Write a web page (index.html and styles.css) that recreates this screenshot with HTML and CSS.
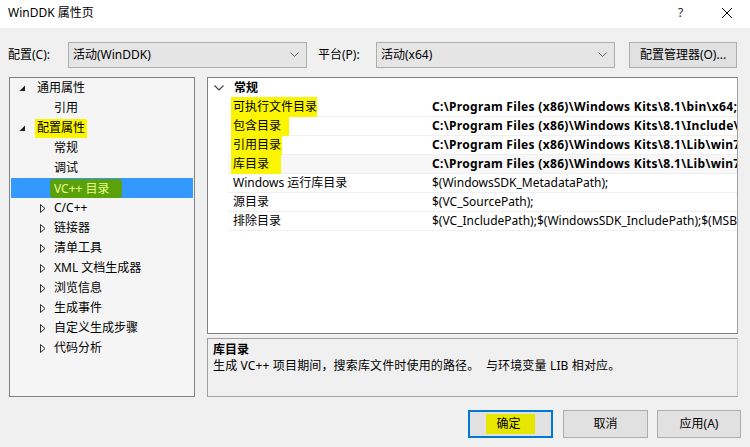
FILE: index.html
```html
<!DOCTYPE html>
<html lang="zh-CN">
<head>
<meta charset="utf-8">
<title>WinDDK 属性页</title>
<link rel="stylesheet" href="styles.css">
</head>
<body>
<div class="window">
  <div class="titlebar">
    <span class="title">WinDDK 属性页</span>
    <span class="help">?</span>
    <span class="close"><svg width="12" height="12" viewBox="0 0 12 12"><path d="M1 1L11 11M11 1L1 11" stroke="#000" stroke-width="1" fill="none"/></svg></span>
  </div>
  <div class="main">
    <div class="toolbar">
      <span class="label lab1">配置(C):</span>
      <div class="combo c1"><span>活动(WinDDK)</span><svg class="chev" width="9" height="6" viewBox="0 0 9 6"><path d="M0.5 0.5L4.5 4.5L8.5 0.5" stroke="#606060" fill="none"/></svg></div>
      <span class="label lab2">平台(P):</span>
      <div class="combo c2"><span>活动(x64)</span><svg class="chev" width="9" height="6" viewBox="0 0 9 6"><path d="M0.5 0.5L4.5 4.5L8.5 0.5" stroke="#606060" fill="none"/></svg></div>
      <div class="btn mgr">配置管理器(O)...</div>
    </div>
    <div class="content">
      <div class="tree">
        <div class="ti l0"><svg class="exp" width="7" height="7" viewBox="0 0 7 7"><path d="M6 0.5L6 6L0.5 6Z" fill="#222"/></svg><span>通用属性</span></div>
        <div class="ti l1"><span>引用</span></div>
        <div class="ti l0"><svg class="exp" width="7" height="7" viewBox="0 0 7 7"><path d="M6 0.5L6 6L0.5 6Z" fill="#222"/></svg><span class="hl hl-tree">配置属性</span></div>
        <div class="ti l1"><span>常规</span></div>
        <div class="ti l1"><span>调试</span></div>
        <div class="ti l1 sel"><span class="hl-green">VC++ 目录</span></div>
        <div class="ti l1c"><svg class="col" width="6" height="9" viewBox="0 0 6 9"><path d="M0.5 0.5L5 4.5L0.5 8.5Z" fill="none" stroke="#333"/></svg><span>C/C++</span></div>
        <div class="ti l1c"><svg class="col" width="6" height="9" viewBox="0 0 6 9"><path d="M0.5 0.5L5 4.5L0.5 8.5Z" fill="none" stroke="#333"/></svg><span>链接器</span></div>
        <div class="ti l1c"><svg class="col" width="6" height="9" viewBox="0 0 6 9"><path d="M0.5 0.5L5 4.5L0.5 8.5Z" fill="none" stroke="#333"/></svg><span>清单工具</span></div>
        <div class="ti l1c"><svg class="col" width="6" height="9" viewBox="0 0 6 9"><path d="M0.5 0.5L5 4.5L0.5 8.5Z" fill="none" stroke="#333"/></svg><span>XML 文档生成器</span></div>
        <div class="ti l1c"><svg class="col" width="6" height="9" viewBox="0 0 6 9"><path d="M0.5 0.5L5 4.5L0.5 8.5Z" fill="none" stroke="#333"/></svg><span>浏览信息</span></div>
        <div class="ti l1c"><svg class="col" width="6" height="9" viewBox="0 0 6 9"><path d="M0.5 0.5L5 4.5L0.5 8.5Z" fill="none" stroke="#333"/></svg><span>生成事件</span></div>
        <div class="ti l1c"><svg class="col" width="6" height="9" viewBox="0 0 6 9"><path d="M0.5 0.5L5 4.5L0.5 8.5Z" fill="none" stroke="#333"/></svg><span>自定义生成步骤</span></div>
        <div class="ti l1c"><svg class="col" width="6" height="9" viewBox="0 0 6 9"><path d="M0.5 0.5L5 4.5L0.5 8.5Z" fill="none" stroke="#333"/></svg><span>代码分析</span></div>
      </div>
      <div class="right">
        <div class="grid">
          <div class="ghead"><svg class="gchev" width="10" height="6" viewBox="0 0 10 6"><path d="M0.5 0.5L5 5L9.5 0.5" stroke="#444" stroke-width="1.2" fill="none"/></svg><span class="gtitle">常规</span></div>
          <div class="grow"><div class="gname"><span class="hl hl-a">可执行文件目录</span></div><div class="gval b">C:\Program Files (x86)\Windows Kits\8.1\bin\x64;</div></div>
          <div class="grow"><div class="gname"><span class="hl hl-b">包含目录</span></div><div class="gval b">C:\Program Files (x86)\Windows Kits\8.1\Include\</div></div>
          <div class="grow"><div class="gname"><span class="hl hl-c">引用目录</span></div><div class="gval b">C:\Program Files (x86)\Windows Kits\8.1\Lib\win7</div></div>
          <div class="grow cur"><div class="gname"><span class="hl hl-d">库目录</span></div><div class="gval b">C:\Program Files (x86)\Windows Kits\8.1\Lib\win7</div></div>
          <div class="grow"><div class="gname">Windows 运行库目录</div><div class="gval">$(WindowsSDK_MetadataPath);</div></div>
          <div class="grow"><div class="gname">源目录</div><div class="gval">$(VC_SourcePath);</div></div>
          <div class="grow"><div class="gname">排除目录</div><div class="gval">$(VC_IncludePath);$(WindowsSDK_IncludePath);$(MSB</div></div>
        </div>
        <div class="desc">
          <div class="dtitle">库目录</div>
          <div class="dtext">生成 VC++ 项目期间，搜索库文件时使用的路径。&nbsp;&nbsp;与环境变量 LIB 相对应。</div>
        </div>
      </div>
    </div>
    <div class="buttons">
      <div class="btn ok"><span class="hl-ok">确定</span></div>
      <div class="btn">取消</div>
      <div class="btn apply">应用(A)</div>
    </div>
  </div>
</div>
</body>
</html>
```
FILE: styles.css
```css
* { box-sizing: border-box; }
html, body { margin: 0; padding: 0; }
body {
  width: 750px;
  height: 447px;
  overflow: hidden;
  font-family: "Noto Sans", "Noto Sans CJK SC", sans-serif;
  font-size: 12px;
  color: #000;
  background: #f0f0f0;
}
.window { width: 750px; height: 447px; display: flex; flex-direction: column; }
.titlebar {
  height: 28px;
  background: #fff;
  display: flex;
  align-items: center;
  padding: 0 0 2px 8px;
}
.title { flex: 1; font-size: 12px; line-height: 16px; }
.help { font-size: 12px; line-height: 16px; width: 12px; margin-right: 31px; color: #222; }
.close { width: 12px; height: 12px; margin-right: 17px; display: flex; }
.main { flex: 1; padding: 14px 11px 0 8px; }
.toolbar { display: flex; align-items: center; height: 26px; }
.label { line-height: 16px; }
.lab1 { width: 60px; }
.lab2 { width: 58px; margin-left: 11px; }
.combo {
  height: 26px;
  background: #e5e5e5;
  border: 1px solid #adadad;
  display: flex;
  align-items: center;
  justify-content: space-between;
  padding: 0 5px 0 4px;
  line-height: 16px;
}
.c1 { width: 239px; }
.c2 { width: 239px; }
.chev { margin-right: 2px; }
.btn {
  background: #e1e1e1;
  border: 1px solid #adadad;
  display: flex;
  align-items: center;
  justify-content: center;
  line-height: 16px;
}
.mgr { width: 108px; height: 26px; margin-left: 14px; }
.content { display: flex; margin-top: 9px; gap: 12px; margin-left: 1px; }
.tree {
  width: 186px;
  height: 320px;
  background: #f5f5f5;
  border: 1px solid #828282;
  padding: 0 1px;
}
.ti { height: 20px; display: flex; align-items: center; line-height: 16px; white-space: nowrap; }
.ti.l0 { padding-left: 8px; }
.ti.l0 .exp { margin-right: 11px; }
.ti.l1 { padding-left: 43px; }
.ti.l1c { padding-left: 29px; }
.ti.l1c .col { margin-right: 8px; }
.ti.sel { background: #3399ff; color: #fff; padding-left: 39px; }
.hl { background: #fbf500; }
.hl-tree { margin-left: -2px; padding: 1px 2px 2px 2px; }
.hl-green { background: #5ba10c; color: #e8ff8a; padding: 2px 12px 1px 4px; border-radius: 3px; }
.right { width: 531px; display: flex; flex-direction: column; gap: 4px; }
.grid {
  height: 257px;
  background: #fff;
  border: 1px solid #828282;
  border-right-color: #a0a0a0;
  overflow: hidden;
}
.ghead { height: 20px; display: flex; align-items: center; padding-left: 6px; }
.gchev { margin-right: 10px; }
.gtitle { font-weight: bold; line-height: 16px; }
.grow { height: 19px; display: flex; align-items: center; margin-left: 20px; border-bottom: 1px solid #f0f0f0; }
.grow.cur { background: #f7f7f7; }
.gname { width: 204px; flex: none; line-height: 16px; padding-left: 5px; white-space: nowrap; }
.gval { flex: 1; white-space: nowrap; overflow: hidden; line-height: 16px; padding-left: 0; }
.gval.b { font-weight: bold; letter-spacing: 0.32px; }
.hl-a { padding: 1px 0 2px 2px; margin-left: -2px; margin-right: -4px; }
.hl-b { padding: 1px 8px 2px 2px; margin-left: -2px; }
.hl-c { padding: 1px 1px 2px 2px; margin-left: -2px; }
.hl-d { padding: 1px 12px 2px 2px; margin-left: -2px; }
.desc {
  height: 59px;
  border: 1px solid #a0a0a0;
  border-right-color: #c8c8c8;
  padding: 3px 5px;
  line-height: 16px;
}
.dtitle { font-weight: bold; }
.dtext { letter-spacing: 0.15px; }
.buttons { display: flex; justify-content: flex-end; gap: 9px; margin-top: 13px; margin-right: -2px; }
.buttons .btn { width: 85px; height: 28px; }
.buttons .btn.apply { width: 84px; }
.btn.ok { border: 2px solid #0078d7; margin-right: 1px; }
.hl-ok { background: #e6e600; padding: 2px 14px 2px 10px; }
```
